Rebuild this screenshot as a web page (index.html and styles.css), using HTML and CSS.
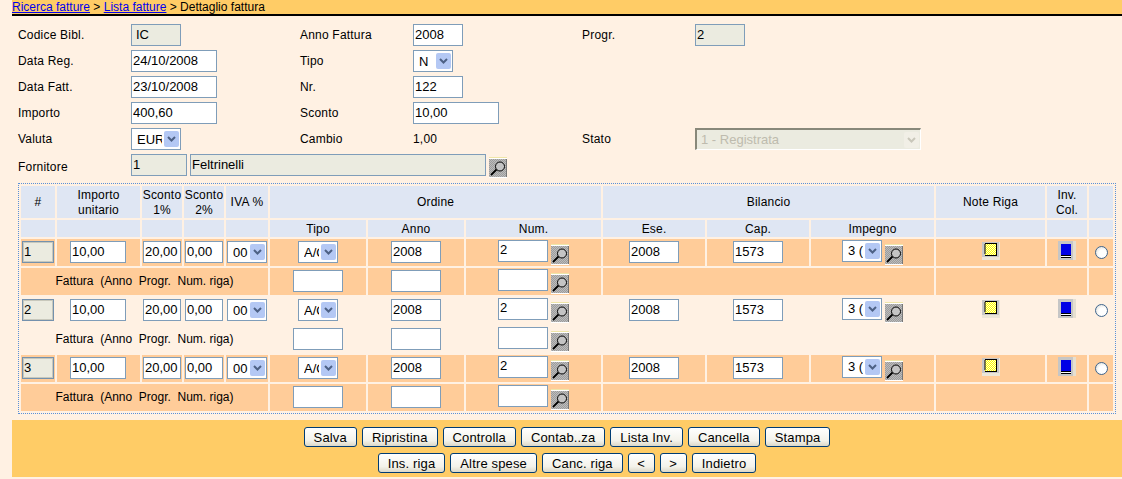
FILE: index.html
```html
<!DOCTYPE html>
<html lang="it">
<head>
    <meta charset="UTF-8">
    <title>Dettaglio fattura</title>
    <link rel="stylesheet" href="styles.css">
</head>
<body>
    <!-- Shared icons -->
    <svg class="icon-defs" width="0" height="0">
        <defs>
            <pattern id="dots" width="2" height="2" patternUnits="userSpaceOnUse">
                <rect width="2" height="2" fill="#bcbcbc"/>
                <rect width="1" height="1" fill="#9c9c9c"/>
                <rect x="1" y="1" width="1" height="1" fill="#9c9c9c"/>
            </pattern>
            <pattern id="yellowdots" width="2" height="2" patternUnits="userSpaceOnUse">
                <rect width="2" height="2" fill="#ffff00"/>
                <rect width="1" height="1" fill="#ffffd0"/>
                <rect x="1" y="1" width="1" height="1" fill="#ffffd0"/>
            </pattern>
            <symbol id="icon-lookup" viewBox="0 0 18 21">
                <rect width="18" height="21" fill="#fff"/>
                <rect y="0" width="18" height="1" fill="#efe6a8"/>
                <rect y="2" width="18" height="18" fill="url(#dots)"/>
                <rect x="17" y="2" width="1" height="18" fill="#777"/>
                <circle cx="11" cy="9.5" r="4.5" fill="#c4c4c4" stroke="#000" stroke-width="1"/>
                <path d="M7.5 12.5 L2 18" stroke="#000" stroke-width="1.8" fill="none"/>
            </symbol>
            <symbol id="icon-note" viewBox="0 0 18 18">
                <rect width="18" height="18" fill="#ece6d8"/>
                <rect width="17" height="15" fill="#c8c8c8"/>
                <rect x="3" y="1" width="12" height="13" fill="#000"/>
                <rect x="3" y="2" width="11" height="11" fill="url(#yellowdots)"/>
                <path d="M2 3h2M2 5h2M2 7h2M2 9h2M2 11h2" stroke="#000" stroke-width="1"/>
            </symbol>
            <symbol id="icon-book" viewBox="0 0 18 19">
                <rect width="18" height="19" fill="#c6c6c6"/>
                <rect x="15" width="3" height="19" fill="#e6dfd0"/>
                <rect x="3" y="3" width="10" height="11" fill="#0000e6"/>
                <rect x="3" y="14" width="10" height="1" fill="#000"/>
                <rect x="3" y="15" width="10" height="1" fill="#fff"/>
                <rect x="3" y="16" width="10" height="1" fill="#000"/>
            </symbol>
            <symbol id="icon-arrow" viewBox="0 0 15 16">
                <rect width="15" height="16" rx="2" fill="#b4c8f4"/>
                <path d="M4 6 L7.5 9.5 L11 6" fill="none" stroke="#4d6185" stroke-width="2"/>
            </symbol>
            <symbol id="icon-arrow-off" viewBox="0 0 15 16">
                <rect width="15" height="16" rx="2" fill="#f1efe6"/>
                <path d="M4 6 L7.5 9.5 L11 6" fill="none" stroke="#c9c7ba" stroke-width="2"/>
            </symbol>
        </defs>
    </svg>

    <div class="crumbs">
        <a href="#">Ricerca fatture</a> &gt; <a href="#">Lista fatture</a> &gt; Dettaglio fattura
    </div>

    <!-- Invoice header fields -->
    <form class="head-form">
        <label>Codice Bibl.</label>
        <div><input class="fld w50 off indent" value="IC" readonly></div>
        <label>Anno Fattura</label>
        <div><input class="fld w50" value="2008"></div>
        <label>Progr.</label>
        <div><input class="fld w50 off" value="2" readonly></div>

        <label>Data Reg.</label>
        <div><input class="fld w86" value="24/10/2008"></div>
        <label>Tipo</label>
        <div class="last-span">
            <span class="combo w40"><select><option>N</option></select><svg class="arrow"><use href="#icon-arrow"/></svg></span>
        </div>

        <label>Data Fatt.</label>
        <div><input class="fld w86" value="23/10/2008"></div>
        <label>Nr.</label>
        <div class="last-span"><input class="fld w50" value="122"></div>

        <label>Importo</label>
        <div><input class="fld w86" value="400,60"></div>
        <label>Sconto</label>
        <div class="last-span"><input class="fld w86" value="10,00"></div>

        <label>Valuta</label>
        <div>
            <span class="combo w50"><select><option>EUR</option></select><svg class="arrow"><use href="#icon-arrow"/></svg></span>
        </div>
        <label>Cambio</label>
        <div class="plain">1,00</div>
        <label>Stato</label>
        <div>
            <span class="combo combo-off"><select disabled><option>1 - Registrata</option></select><svg class="arrow"><use href="#icon-arrow-off"/></svg></span>
        </div>

        <label class="low">Fornitore</label>
        <div class="supplier">
            <input class="fld w56 off" value="1" readonly>
            <input class="fld w296 off" value="Feltrinelli" readonly>
            <button type="button" class="lookup"><svg><use href="#icon-lookup"/></svg></button>
        </div>
    </form>

    <!-- Invoice lines -->
    <div class="lines">
        <table>
            <colgroup>
                <col class="c34"><col class="c83"><col class="c40"><col class="c40"><col class="c42">
                <col class="c96"><col class="c96"><col class="c135">
                <col class="c102"><col class="c102"><col class="c123">
                <col class="c109"><col class="c40"><col class="c24">
            </colgroup>
            <thead>
                <tr class="h-top">
                    <th>#</th><th>Importo<br>unitario</th><th>Sconto<br>1%</th><th>Sconto<br>2%</th><th>IVA %</th>
                    <th colspan="3">Ordine</th><th colspan="3">Bilancio</th>
                    <th>Note Riga</th><th>Inv.<br>Col.</th><th></th>
                </tr>
                <tr class="h-sub">
                    <th></th><th></th><th></th><th></th><th></th>
                    <th>Tipo</th><th>Anno</th><th>Num.</th><th>Ese.</th><th>Cap.</th><th>Impegno</th>
                    <th></th><th></th><th></th>
                </tr>
            </thead>
            <tbody class="odd">
                <tr>
                    <td><input class="fld w32 off dark" value="1" readonly></td>
                    <td class="amount"><input class="fld w56" value="10,00"></td>
                    <td><input class="fld w38" value="20,00"></td>
                    <td><input class="fld w38" value="0,00"></td>
                    <td><span class="combo w40"><select><option>00</option></select><svg class="arrow"><use href="#icon-arrow"/></svg></span></td>
                    <td><span class="combo w40"><select><option>A/O</option></select><svg class="arrow"><use href="#icon-arrow"/></svg></span></td>
                    <td><input class="fld w50" value="2008"></td>
                    <td><span class="pair"><input class="fld w50" value="2"><button type="button" class="lookup"><svg><use href="#icon-lookup"/></svg></button></span></td>
                    <td><input class="fld w50" value="2008"></td>
                    <td><input class="fld w50" value="1573"></td>
                    <td><span class="pair"><span class="combo w40"><select><option>3 (2008)</option></select><svg class="arrow"><use href="#icon-arrow"/></svg></span><button type="button" class="lookup"><svg><use href="#icon-lookup"/></svg></button></span></td>
                    <td><svg class="note"><use href="#icon-note"/></svg></td>
                    <td><svg class="book"><use href="#icon-book"/></svg></td>
                    <td><input type="radio" name="riga" class="radio"></td>
                </tr>
                <tr>
                    <td colspan="5" class="ref">Fattura&nbsp; (Anno&nbsp; Progr.&nbsp; Num. riga)</td>
                    <td><input class="fld w50"></td>
                    <td><input class="fld w50"></td>
                    <td><span class="pair"><input class="fld w50"><button type="button" class="lookup"><svg><use href="#icon-lookup"/></svg></button></span></td>
                    <td colspan="3"></td>
                    <td colspan="2"></td>
                    <td></td>
                </tr>
            </tbody>
            <tbody>
                <tr>
                    <td><input class="fld w32 off dark" value="2" readonly></td>
                    <td class="amount"><input class="fld w56" value="10,00"></td>
                    <td><input class="fld w38" value="20,00"></td>
                    <td><input class="fld w38" value="0,00"></td>
                    <td><span class="combo w40"><select><option>00</option></select><svg class="arrow"><use href="#icon-arrow"/></svg></span></td>
                    <td><span class="combo w40"><select><option>A/O</option></select><svg class="arrow"><use href="#icon-arrow"/></svg></span></td>
                    <td><input class="fld w50" value="2008"></td>
                    <td><span class="pair"><input class="fld w50" value="2"><button type="button" class="lookup"><svg><use href="#icon-lookup"/></svg></button></span></td>
                    <td><input class="fld w50" value="2008"></td>
                    <td><input class="fld w50" value="1573"></td>
                    <td><span class="pair"><span class="combo w40"><select><option>3 (2008)</option></select><svg class="arrow"><use href="#icon-arrow"/></svg></span><button type="button" class="lookup"><svg><use href="#icon-lookup"/></svg></button></span></td>
                    <td><svg class="note"><use href="#icon-note"/></svg></td>
                    <td><svg class="book"><use href="#icon-book"/></svg></td>
                    <td><input type="radio" name="riga" class="radio"></td>
                </tr>
                <tr>
                    <td colspan="5" class="ref">Fattura&nbsp; (Anno&nbsp; Progr.&nbsp; Num. riga)</td>
                    <td><input class="fld w50"></td>
                    <td><input class="fld w50"></td>
                    <td><span class="pair"><input class="fld w50"><button type="button" class="lookup"><svg><use href="#icon-lookup"/></svg></button></span></td>
                    <td colspan="3"></td>
                    <td colspan="2"></td>
                    <td></td>
                </tr>
            </tbody>
            <tbody class="odd">
                <tr>
                    <td><input class="fld w32 off dark" value="3" readonly></td>
                    <td class="amount"><input class="fld w56" value="10,00"></td>
                    <td><input class="fld w38" value="20,00"></td>
                    <td><input class="fld w38" value="0,00"></td>
                    <td><span class="combo w40"><select><option>00</option></select><svg class="arrow"><use href="#icon-arrow"/></svg></span></td>
                    <td><span class="combo w40"><select><option>A/O</option></select><svg class="arrow"><use href="#icon-arrow"/></svg></span></td>
                    <td><input class="fld w50" value="2008"></td>
                    <td><span class="pair"><input class="fld w50" value="2"><button type="button" class="lookup"><svg><use href="#icon-lookup"/></svg></button></span></td>
                    <td><input class="fld w50" value="2008"></td>
                    <td><input class="fld w50" value="1573"></td>
                    <td><span class="pair"><span class="combo w40"><select><option>3 (2008)</option></select><svg class="arrow"><use href="#icon-arrow"/></svg></span><button type="button" class="lookup"><svg><use href="#icon-lookup"/></svg></button></span></td>
                    <td><svg class="note"><use href="#icon-note"/></svg></td>
                    <td><svg class="book"><use href="#icon-book"/></svg></td>
                    <td><input type="radio" name="riga" class="radio"></td>
                </tr>
                <tr>
                    <td colspan="5" class="ref">Fattura&nbsp; (Anno&nbsp; Progr.&nbsp; Num. riga)</td>
                    <td><input class="fld w50"></td>
                    <td><input class="fld w50"></td>
                    <td><span class="pair"><input class="fld w50"><button type="button" class="lookup"><svg><use href="#icon-lookup"/></svg></button></span></td>
                    <td colspan="3"></td>
                    <td colspan="2"></td>
                    <td></td>
                </tr>
            </tbody>
        </table>
    </div>

    <!-- Action buttons -->
    <div class="actions">
        <div class="action-row">
            <button type="button" class="btn">Salva</button>
            <button type="button" class="btn">Ripristina</button>
            <button type="button" class="btn">Controlla</button>
            <button type="button" class="btn">Contab..za</button>
            <button type="button" class="btn">Lista Inv.</button>
            <button type="button" class="btn">Cancella</button>
            <button type="button" class="btn">Stampa</button>
        </div>
        <div class="action-row">
            <button type="button" class="btn">Ins. riga</button>
            <button type="button" class="btn">Altre spese</button>
            <button type="button" class="btn">Canc. riga</button>
            <button type="button" class="btn tiny">&lt;</button>
            <button type="button" class="btn tiny">&gt;</button>
            <button type="button" class="btn">Indietro</button>
        </div>
    </div>
</body>
</html>
```

FILE: styles.css
```css
/* General styles */
body {
    margin: 0;
    background: #fff1e3;
    font-family: "Liberation Sans", Arial, sans-serif;
    font-size: 12px;
    letter-spacing: .2px;
    color: #000;
}

.icon-defs {
    display: block;
    height: 0;
}

/* Breadcrumb bar */
.crumbs {
    margin-left: 12px;
    height: 14px;
    line-height: 14px;
    background: #ffcc66;
    border-bottom: 2px solid #000;
    letter-spacing: 0;
}

.crumbs a {
    color: #0000ee;
}

/* Header form */
.head-form {
    display: grid;
    grid-template-columns: 113px 169px 113px 169px 113px 1fr;
    grid-auto-rows: 22px;
    row-gap: 4px;
    margin: 8px 0 0 18px;
}

.head-form label,
.head-form .plain {
    align-self: center;
}

.head-form .low {
    padding-top: 3px;
}

.last-span {
    grid-column: 4 / 7;
}

.supplier {
    grid-column: 2 / 7;
    display: flex;
    align-items: flex-start;
    gap: 3px;
}

.supplier .lookup {
    margin-top: 3px;
}

/* Fields */
.fld {
    display: block;
    box-sizing: border-box;
    height: 22px;
    margin: 0;
    padding: 0 1px 2px;
    border: 1px solid #7f9db9;
    border-radius: 0;
    background: #fff;
    font: inherit;
    font-size: 13px;
    letter-spacing: 0;
    color: #000;
    outline: none;
}

.off {
    background: #ebebe0;
}

.indent {
    padding-left: 4px;
}

.dark {
    margin: 0 auto;
    border-color: #7491ad;
    box-shadow: inset 0 0 0 1px #c8c8bc;
}

.w32 { width: 32px; }
.w38 { width: 38px; }
.w40 { width: 40px; }
.w50 { width: 50px; }
.w56 { width: 56px; }
.w86 { width: 86px; }
.w296 { width: 296px; }

.combo {
    position: relative;
    display: inline-block;
    box-sizing: border-box;
    height: 22px;
    border: 1px solid #7f9db9;
    background: #fff;
    vertical-align: top;
    overflow: hidden;
}

.combo select {
    display: block;
    box-sizing: border-box;
    width: 100%;
    height: 20px;
    margin: 0;
    padding: 0 18px 0 5px;
    border: 0;
    border-radius: 0;
    background: transparent;
    font: inherit;
    font-size: 13px;
    letter-spacing: 0;
    color: #000;
    appearance: none;
    outline: none;
}

.combo .arrow {
    position: absolute;
    top: 2px;
    right: 1px;
    width: 15px;
    height: 16px;
}

.combo-off {
    width: 226px;
    border-color: #88887a #fff #fff #88887a;
    border-width: 2px 1px 1px 2px;
    background: #ebebe0;
}

.combo-off select {
    height: 19px;
    padding-left: 4px;
    color: #aca899;
}

.lookup {
    display: block;
    flex: none;
    width: 18px;
    height: 21px;
    padding: 0;
    border: 0;
    background: none;
}

.lookup svg {
    display: block;
    width: 18px;
    height: 21px;
}

/* Lines table */
.lines {
    width: 1098px;
    box-sizing: border-box;
    margin: 7px 0 0 18px;
    border: 1px dotted #5a90d8;
}

.lines table {
    width: 1096px;
    table-layout: fixed;
    border-collapse: separate;
    border-spacing: 2px;
}

.c24 { width: 24px; }
.c34 { width: 34px; }
.c40 { width: 40px; }
.c42 { width: 42px; }
.c83 { width: 83px; }
.c96 { width: 96px; }
.c102 { width: 102px; }
.c109 { width: 109px; }
.c123 { width: 123px; }
.c135 { width: 135px; }

.lines th {
    box-sizing: border-box;
    padding: 1px 0 0;
    background: #dfe6f3;
    font-weight: normal;
    line-height: 15px;
    text-align: center;
}

.h-top th { height: 32px; }
.h-sub th { height: 17px; }

.lines td {
    box-sizing: border-box;
    height: 27px;
    padding: 0 0 1px;
    text-align: center;
    vertical-align: middle;
    white-space: nowrap;
}

.lines td > .fld {
    margin: 0 auto;
}

.lines td.amount {
    padding-right: 1px;
}

.lines td.ref {
    letter-spacing: 0;
}

.odd td {
    background: #ffcc99;
}

.pair {
    display: inline-flex;
    vertical-align: top;
    align-items: flex-start;
    gap: 3px;
}

.pair .lookup {
    margin-top: 4px;
}

.note {
    display: block;
    width: 18px;
    height: 18px;
    margin: 0 auto 3px;
}

.book {
    display: block;
    width: 18px;
    height: 19px;
    margin: 0 auto 3px;
}

.radio {
    display: block;
    box-sizing: border-box;
    width: 13px;
    height: 13px;
    margin: 1px auto 0;
    border: 1px solid #3f668f;
    border-radius: 50%;
    background: radial-gradient(circle at 60% 60%, #fff 40%, #d5d5cd 100%);
    appearance: none;
}

/* Action bar */
.actions {
    margin: 6px 0 2px 12px;
    padding: 7px 0 4px;
    background: #ffcc66;
}

.action-row {
    display: flex;
    justify-content: center;
    gap: 5px;
}

.action-row + .action-row {
    margin-top: 6px;
}

.btn {
    box-sizing: border-box;
    height: 20px;
    padding: 0 9px;
    border: 1px solid #003c74;
    border-radius: 3px;
    background: linear-gradient(#ffffff, #f3f2ea 70%, #dcd8c8);
    font: inherit;
    font-size: 13px;
    letter-spacing: .15px;
    color: #000;
}

.tiny {
    width: 27px;
    padding: 0;
}
```
